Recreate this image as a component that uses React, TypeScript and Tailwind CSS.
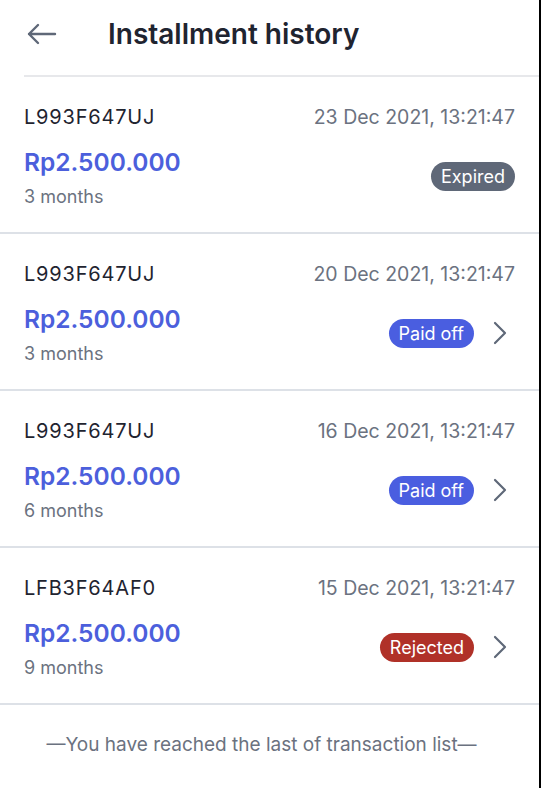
type Status = 'expired' | 'paid' | 'rejected';

interface Installment {
  id: string;
  date: string;
  amount: string;
  tenor: string;
  status: Status;
}

const items: Installment[] = [
  { id: 'L993F647UJ', date: '23 Dec 2021, 13:21:47', amount: 'Rp2.500.000', tenor: '3 months', status: 'expired' },
  { id: 'L993F647UJ', date: '20 Dec 2021, 13:21:47', amount: 'Rp2.500.000', tenor: '3 months', status: 'paid' },
  { id: 'L993F647UJ', date: '16 Dec 2021, 13:21:47', amount: 'Rp2.500.000', tenor: '6 months', status: 'paid' },
  { id: 'LFB3F64AF0', date: '15 Dec 2021, 13:21:47', amount: 'Rp2.500.000', tenor: '9 months', status: 'rejected' },
];

function StatusBadge({ status }: { status: Status }) {
  if (status === 'expired')
    return <span className="rounded-full bg-[#5f6878] px-[10px] py-[2px] text-[18px] leading-[25px] text-white">Expired</span>;
  if (status === 'paid')
    return <span className="rounded-full bg-[#4a5ee0] px-[10px] py-[2px] text-[18px] leading-[25px] text-white">Paid off</span>;
  return <span className="rounded-full bg-[#b03128] px-[10px] py-[2px] text-[18px] leading-[25px] text-white">Rejected</span>;
}

export default function App() {
  return (
    <div className="flex min-h-[788px] bg-black font-['Inter',sans-serif]">
      <div className="w-[539px] bg-white">
        <header className="ml-6 flex h-[77px] items-center border-b-2 border-[#e7e8eb] pb-[7px]">
          <svg width="30" height="22" viewBox="0 0 30 22" className="ml-[3px]" fill="none" stroke="#5f6878" strokeWidth="2.4" strokeLinecap="round" strokeLinejoin="round">
            <path d="M28 11H2M11 2L2 11L11 20" />
          </svg>
          <h1 className="ml-[51px] text-[28px] font-semibold text-[#1f2430]">Installment history</h1>
        </header>

        {items.map((item, idx) => (
          <div key={idx} className="border-b-2 border-[#dde1e7] px-6 pt-[26px] pb-[22px]">
            <div className="flex items-center justify-between leading-[28px]">
              <span className="text-[20px] tracking-[0.04em] text-[#1f2430]">{item.id}</span>
              <span className="text-[19.5px] text-[#6b7280]">{item.date}</span>
            </div>
            <div className="mt-[15px] flex items-center justify-between">
              <div>
                <div className="text-[24.5px] font-semibold leading-[32px] text-[#4c5fdc]">{item.amount}</div>
                <div className="mt-[6px] text-[18px] leading-[26px] text-[#6b7280]">{item.tenor}</div>
              </div>
              <div className="mb-[4px] flex items-center">
                <StatusBadge status={item.status} />
                {item.status !== 'expired' && (
                  <svg width="14" height="24" viewBox="0 0 14 24" className="ml-[19px] mr-[8px]" fill="none" stroke="#5f6878" strokeWidth="2.2" strokeLinecap="round" strokeLinejoin="round">
                    <path d="M2 2L12 12L2 22" />
                  </svg>
                )}
              </div>
            </div>
          </div>
        ))}

        <p className="pt-[26px] pr-[16px] text-center text-[19px] leading-[28px] text-[#6b7280]">—You have reached the last of transaction list—</p>
      </div>
    </div>
  );
}
